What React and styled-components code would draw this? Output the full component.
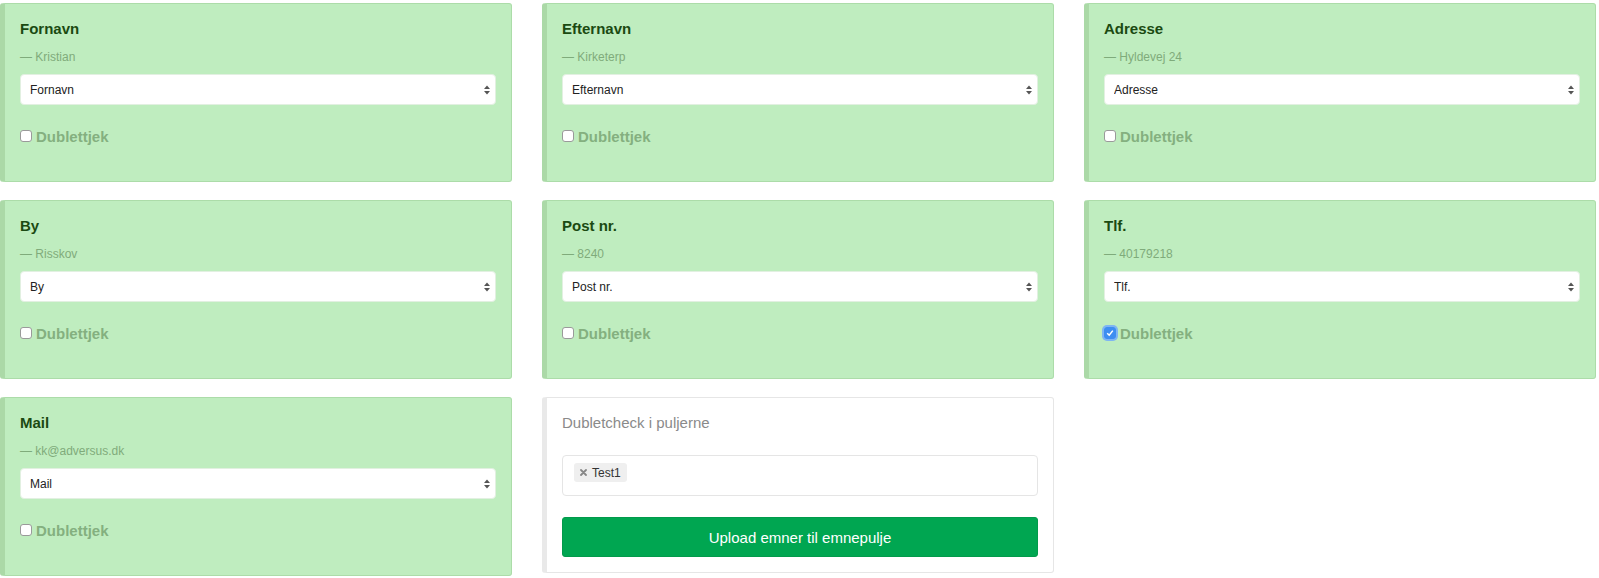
import React from "react";
import styled, { createGlobalStyle } from "styled-components";

const GlobalStyle = createGlobalStyle`
  html, body {
    margin: 0;
    padding: 0;
    background: #fff;
  }
  body {
    font-family: "Liberation Sans", Arial, Helvetica, sans-serif;
    color: #333;
  }
`;

const Page = styled.div`
  display: grid;
  grid-template-columns: repeat(3, 512px);
  column-gap: 30px;
  row-gap: 18px;
  align-items: start;
  padding-top: 3px;
`;

const Card = styled.div`
  box-sizing: border-box;
  padding: 15px;
  border: 1px solid ${(p) => (p.$plain ? "#e6e6e6" : "#acdca9")};
  border-left: 5px solid ${(p) => (p.$plain ? "#e9e9e9" : "#abd9a7")};
  border-radius: 3px;
  background: ${(p) => (p.$plain ? "#fff" : "#bfedbf")};
`;

const Title = styled.div`
  font-size: 15px;
  line-height: 20px;
  font-weight: bold;
  color: #1b4a12;
  margin-bottom: 10px;
`;

const Example = styled.div`
  font-size: 12px;
  line-height: 17px;
  color: #7fab7b;
  margin-bottom: 8px;
`;

const SelectWrap = styled.div`
  position: relative;
`;

const Select = styled.select`
  appearance: none;
  -webkit-appearance: none;
  box-sizing: border-box;
  display: block;
  width: 100%;
  height: 31px;
  padding: 0 24px 0 9px;
  border: 1px solid #e2f0e1;
  border-radius: 4px;
  background: #fff;
  font-family: "Liberation Sans", Arial, Helvetica, sans-serif;
  font-size: 12px;
  color: #222;
  outline: none;
`;

const Arrows = styled.svg`
  position: absolute;
  right: 5px;
  top: 50%;
  margin-top: -5px;
  pointer-events: none;
`;

const CheckRow = styled.label`
  display: flex;
  align-items: center;
  height: 20px;
  margin: 21px 0 20px;
  font-size: 15px;
  font-weight: bold;
  color: #84b07f;
`;

const Box = styled.span`
  box-sizing: border-box;
  display: inline-flex;
  align-items: center;
  justify-content: center;
  width: 12px;
  height: 12px;
  margin-right: 4px;
  border-radius: 3px;
  border: 1px solid ${(p) => (p.$checked ? "#3d8ef1" : "#9a9a9a")};
  background: ${(p) => (p.$checked ? "#3d8ef1" : "#fff")};
  box-shadow: ${(p) => (p.$checked ? "0 0 0 2px #7eb5f3" : "none")};
`;

const PlainTitle = styled.div`
  font-size: 15px;
  line-height: 20px;
  color: #8a8a8a;
  margin-bottom: 22px;
`;

const TagBox = styled.div`
  box-sizing: border-box;
  display: flex;
  align-items: flex-start;
  height: 41px;
  padding: 7px 11px;
  border: 1px solid #e5e5e5;
  border-radius: 4px;
  margin-bottom: 21px;
`;

const Tag = styled.span`
  display: inline-flex;
  align-items: center;
  height: 19px;
  padding: 0 6px 0 6px;
  border-radius: 3px;
  background: #efefef;
  font-size: 12px;
  color: #333;
`;

const TagX = styled.svg`
  margin-right: 5px;
`;

const Button = styled.button`
  display: block;
  width: 100%;
  height: 40px;
  border: 1px solid #029a4b;
  border-radius: 3px;
  background: #00a651;
  color: #fff;
  font-family: "Liberation Sans", Arial, Helvetica, sans-serif;
  font-size: 15px;
  cursor: pointer;
`;

const SelectArrows = () => (
  <Arrows width="8" height="10" viewBox="0 0 8 10">
    <path d="M4 0.5 L7 4 L1 4 Z" fill="#555" />
    <path d="M4 9.5 L7 6 L1 6 Z" fill="#555" />
  </Arrows>
);

const Checkbox = ({ checked }) => (
  <Box $checked={checked}>
    {checked && (
      <svg width="8" height="8" viewBox="0 0 8 8">
        <path d="M1.2 4.2 L3.2 6.2 L6.8 1.6" stroke="#fff" strokeWidth="1.5" fill="none" />
      </svg>
    )}
  </Box>
);

const FieldCard = ({ title, example, checked }) => (
  <Card>
    <Title>{title}</Title>
    <Example>— {example}</Example>
    <SelectWrap>
      <Select defaultValue={title}>
        <option>{title}</option>
      </Select>
      <SelectArrows />
    </SelectWrap>
    <CheckRow>
      <Checkbox checked={checked} />
      Dublettjek
    </CheckRow>
  </Card>
);

const fields = [
  { title: "Fornavn", example: "Kristian" },
  { title: "Efternavn", example: "Kirketerp" },
  { title: "Adresse", example: "Hyldevej 24" },
  { title: "By", example: "Risskov" },
  { title: "Post nr.", example: "8240" },
  { title: "Tlf.", example: "40179218", checked: true },
  { title: "Mail", example: "kk@adversus.dk" },
];

export default function App() {
  return (
    <>
      <GlobalStyle />
      <Page>
        {fields.map((f) => (
          <FieldCard key={f.title} {...f} />
        ))}
        <Card $plain>
          <PlainTitle>Dubletcheck i puljerne</PlainTitle>
          <TagBox>
            <Tag>
              <TagX width="7" height="7" viewBox="0 0 7 7">
                <path d="M1 1 L6 6 M6 1 L1 6" stroke="#888" strokeWidth="1.8" strokeLinecap="round" />
              </TagX>
              Test1
            </Tag>
          </TagBox>
          <Button>Upload emner til emnepulje</Button>
        </Card>
      </Page>
    </>
  );
}
